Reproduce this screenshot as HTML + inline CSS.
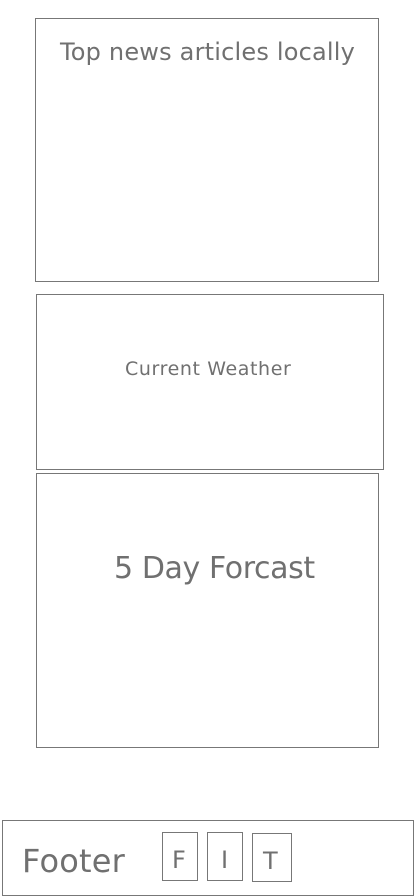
<!DOCTYPE html>
<html><head><style>
body{margin:0;width:414px;height:896px;background:#fff;position:relative;font-family:"DejaVu Sans","Liberation Sans",sans-serif;color:#707070;overflow:hidden}
.b{position:absolute;border:1px solid #777;box-sizing:border-box}
.t{position:absolute;white-space:nowrap;font-weight:normal}
</style></head><body>
<div class="b" style="left:35px;top:18px;width:344px;height:264px"></div>
<div class="t" style="left:60px;top:38px;font-size:24px;letter-spacing:0.2px">Top news articles locally</div>
<div class="b" style="left:36px;top:294px;width:348px;height:176px"></div>
<div class="t" style="left:125px;top:358px;font-size:19px;letter-spacing:0.6px">Current Weather</div>
<div class="b" style="left:36px;top:473px;width:343px;height:275px"></div>
<div class="t" style="left:114px;top:551px;font-size:30px;letter-spacing:-0.4px">5 Day Forcast</div>
<div class="b" style="left:2px;top:820px;width:412px;height:76px"></div>
<div class="t" style="left:22px;top:842px;font-size:32px;letter-spacing:0.2px">Footer</div>
<div class="b" style="left:162px;top:832px;width:36px;height:49px"></div>
<div class="t" style="left:172px;top:846px;font-size:24px">F</div>
<div class="b" style="left:207px;top:832px;width:36px;height:49px"></div>
<div class="t" style="left:221px;top:846px;font-size:24px">I</div>
<div class="b" style="left:252px;top:833px;width:40px;height:49px"></div>
<div class="t" style="left:263px;top:847px;font-size:24px">T</div>
</body></html>
